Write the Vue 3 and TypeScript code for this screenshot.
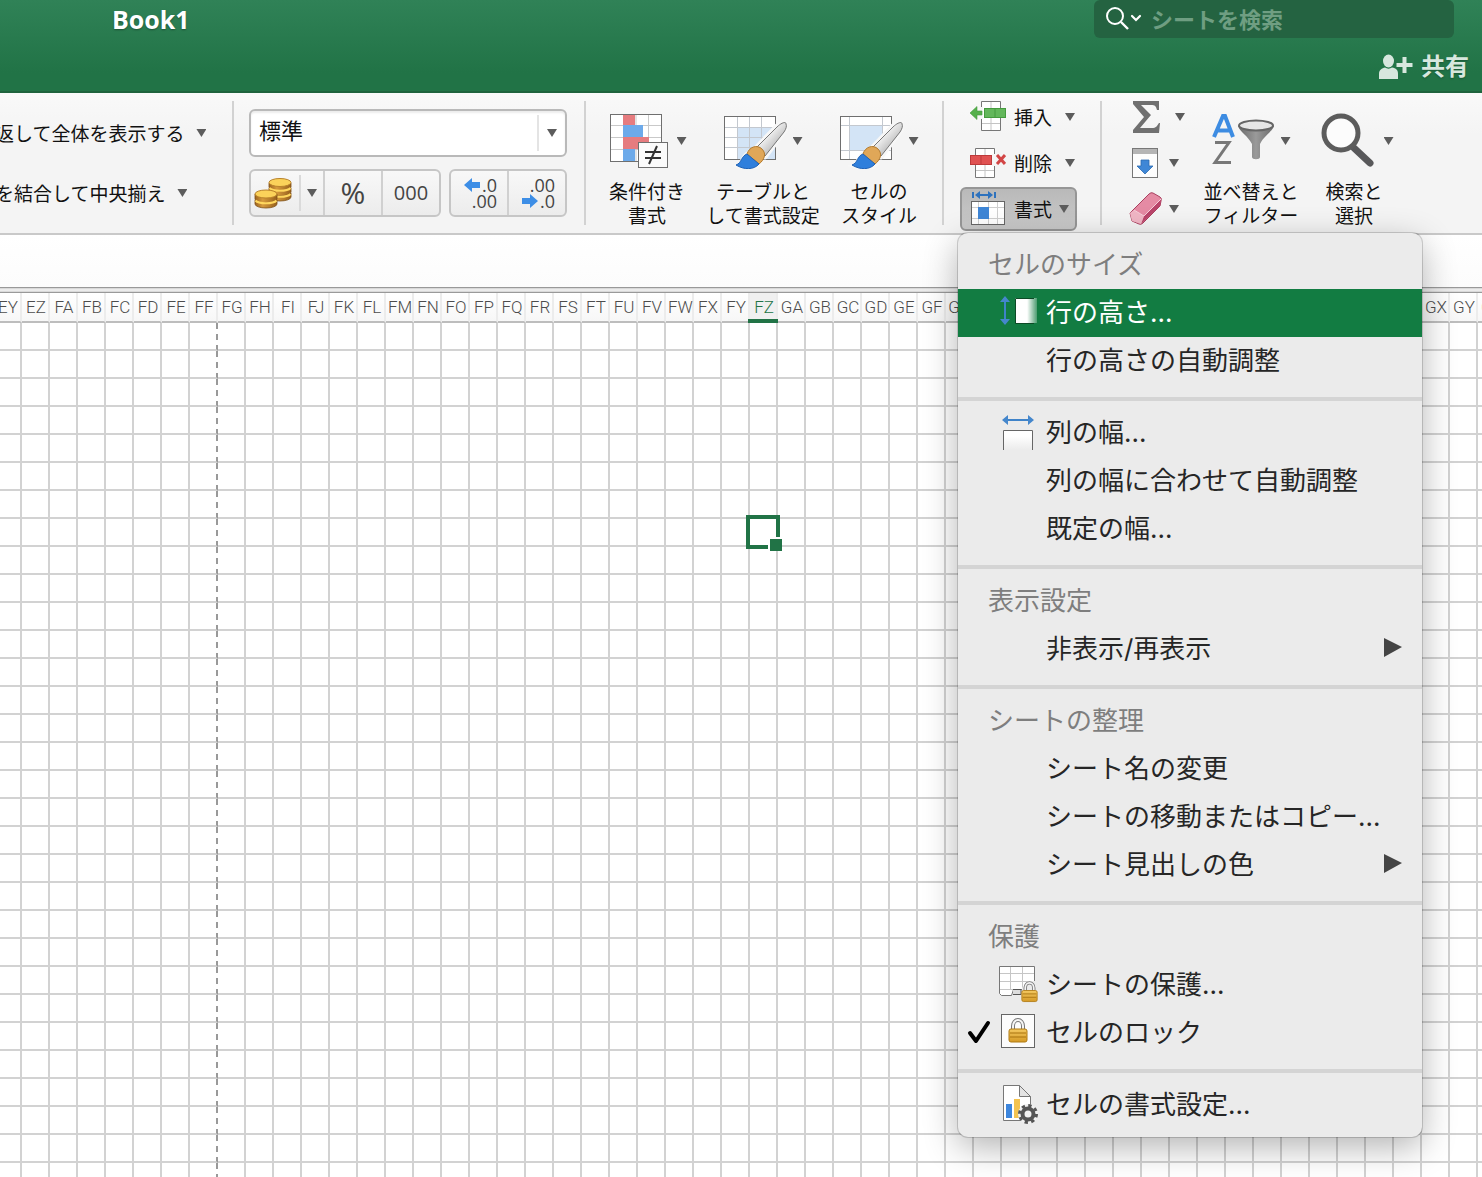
<script setup lang="ts">
import { ref } from 'vue'

interface MenuEntry {
  label: string
  icon?: string
  submenu?: boolean
  checked?: boolean
}

interface MenuSection {
  title?: string
  entries: MenuEntry[]
}

const letters = 'ABCDEFGHIJKLMNOPQRSTUVWXYZ'.split('')
const columns: string[] = [
  'EY',
  'EZ',
  ...letters.map((l) => 'F' + l),
  ...letters.map((l) => 'G' + l),
  ...letters.map((l) => 'H' + l),
]
const rowCount = 48
const activeColumn = 'FZ'
const activeRow = 8
const pageBreakColumn = 'FF'

const numberFormat = ref('標準')
const search = ref('')
const formula = ref('')
const current = ref('行の高さ...')

const sections: MenuSection[] = [
  {
    title: 'セルのサイズ',
    entries: [{ label: '行の高さ...', icon: 'row-height' }, { label: '行の高さの自動調整' }],
  },
  {
    entries: [
      { label: '列の幅...', icon: 'col-width' },
      { label: '列の幅に合わせて自動調整' },
      { label: '既定の幅...' },
    ],
  },
  { title: '表示設定', entries: [{ label: '非表示/再表示', submenu: true }] },
  {
    title: 'シートの整理',
    entries: [
      { label: 'シート名の変更' },
      { label: 'シートの移動またはコピー...' },
      { label: 'シート見出しの色', submenu: true },
    ],
  },
  {
    title: '保護',
    entries: [
      { label: 'シートの保護...', icon: 'protect' },
      { label: 'セルのロック', icon: 'lock', checked: true },
    ],
  },
  { entries: [{ label: 'セルの書式設定...', icon: 'format' }] },
]
</script>

<template>
  <div class="window">
    <svg class="defs" width="0" height="0" aria-hidden="true">
      <defs>
        <linearGradient id="handle" x1="0" y1="0" x2="1" y2="1">
          <stop offset="0.3" stop-color="#ffffff" />
          <stop offset="0.75" stop-color="#b4b4b4" />
        </linearGradient>
        <linearGradient id="gold" x1="0" y1="0" x2="0" y2="1">
          <stop offset="0" stop-color="#f3c860" />
          <stop offset="1" stop-color="#d59a26" />
        </linearGradient>
        <linearGradient id="coinside" x1="0" y1="0" x2="1" y2="0">
          <stop offset="0" stop-color="#9c6420" />
          <stop offset="0.35" stop-color="#d69a3c" />
          <stop offset="1" stop-color="#96601d" />
        </linearGradient>
        <linearGradient id="steel" x1="0" y1="0" x2="1" y2="0">
          <stop offset="0" stop-color="#6a6a6a" />
          <stop offset="0.5" stop-color="#9a9a9a" />
          <stop offset="1" stop-color="#6a6a6a" />
        </linearGradient>
        <linearGradient id="fade-right" x1="0" y1="0" x2="1" y2="0">
          <stop offset="0.55" stop-color="#ffffff" />
          <stop offset="1" stop-color="#ffffff" stop-opacity="0.25" />
        </linearGradient>
        <linearGradient id="fade-down" x1="0" y1="0" x2="0" y2="1">
          <stop offset="0.3" stop-color="#ffffff" />
          <stop offset="1" stop-color="#ebebeb" />
        </linearGradient>
        <g id="brush">
          <path d="M30 37 L53 13 C57 9 62 8 62 11 C63 13 62 16 60 19 L41 44 Z" fill="#f7f7f7" stroke="#f7f7f7" stroke-width="5" stroke-linejoin="round" />
          <path d="M13 53 C19 51 18 43 24 40 L37 51 C31 57 21 57 13 53 Z" stroke="#f7f7f7" stroke-width="4" fill="#f7f7f7" />
          <path d="M31 36 L53 14 C57 10 62 8 62 11 C63 13 62 16 60 19 L41 43 Z" fill="url(#handle)" stroke="#777" stroke-width="1" />
          <path d="M23 41 C25 34 33 31 38 36 C43 41 40 47 35 51 Z" fill="#e0a758" stroke="#b37a2c" stroke-width="1" />
          <path d="M12 52 C18 50 17 43 23 41 L35 51 C30 57 20 57 12 52 Z" fill="#2f7fdc" stroke="#1f62b5" stroke-width="1" />
        </g>
        <g id="padlock">
          <path d="M5 10 V7 a5 6 0 0 1 10 0 V10" fill="none" stroke="#777" stroke-width="4" />
          <path d="M5 11 V7 a5 6 0 0 1 10 0 V11" fill="none" stroke="#f4f4f4" stroke-width="2" />
          <rect x="1" y="10" width="18" height="13" rx="2" fill="url(#gold)" stroke="#b07a12" />
          <path d="M2 14 H18 M2 18 H18" stroke="#a8720f" stroke-width="1" />
        </g>
      </defs>
    </svg>

    <header class="titlebar">
      <div class="title-row">
        <h1>Book1</h1>
        <label class="search">
          <svg width="36" height="26" viewBox="0 0 36 26" fill="none" stroke="#fff" stroke-width="2">
            <circle cx="9" cy="10" r="8" />
            <path d="M15 16 L22 23" stroke-width="2.4" />
            <path d="M26 10 L30 14 L34 10" stroke-width="2.2" stroke-linecap="round" />
          </svg>
          <input v-model="search" type="text" placeholder="シートを検索" aria-label="シートを検索" />
        </label>
      </div>
      <div class="share-row">
        <button class="share" type="button">
          <svg width="36" height="30" viewBox="0 -4 36 30" fill="#d7e7de">
            <ellipse cx="10.500" cy="7" rx="5.500" ry="6.500" />
            <path d="M1 25 V20 C1 16 4 14 7 13.500 C9 15 12 15 14 13.500 C18 14 20 16 20 20 V25 Z" />
            <path d="M24.500 3 h4 v6 h6 v4 h-6 v6 h-4 v-6 h-6 v-4 h6 Z" />
          </svg>
          <span>共有</span>
        </button>
      </div>
    </header>

    <div class="ribbon">
      <div class="group align">
        <button class="plain" type="button"><span>折り返して全体を表示する</span><i class="caret"></i></button>
        <button class="plain" type="button"><span>セルを結合して中央揃え</span><i class="caret"></i></button>
      </div>
      <span class="sep"></span>

      <div class="group number">
        <div class="combo">
          <select v-model="numberFormat" aria-label="表示形式">
            <option>標準</option>
          </select>
          <span class="combo-arrow"><i class="caret"></i></span>
        </div>
        <div class="number-buttons">
          <div class="segmented">
            <button class="coins" type="button" aria-label="通貨表示形式">
              <svg width="38" height="32" viewBox="0 0 38 32">
                <g stroke="#7d4f16" stroke-width="0.8">
                  <path d="M14 20 v4 a11 4 0 0 0 22 0 v-4" transform="translate(1 -4)" fill="url(#coinside)" />
                  <path d="M15 12 v4 a11 4 0 0 0 22 0 v-4" transform="translate(0 -1)" fill="url(#coinside)" />
                  <path d="M15 6 v4 a11 4 0 0 0 22 0 v-4" fill="url(#coinside)" />
                </g>
                <path d="M15.500 17 a11 4 0 0 0 21 0 M15.500 11 a11 4 0 0 0 21 0" fill="none" stroke="#ffd75e" stroke-width="2" />
                <ellipse cx="26" cy="5.500" rx="11" ry="4" fill="#fbd25a" stroke="#b9822a" />
                <g stroke="#7d4f16" stroke-width="0.8">
                  <path d="M1 23 v4 a11 4 0 0 0 22 0 v-4" fill="url(#coinside)" />
                  <path d="M1 17 v5 a11 4 0 0 0 22 0 v-5" fill="url(#coinside)" />
                </g>
                <path d="M1.500 23.500 a11 4 0 0 0 21 0" fill="none" stroke="#ffd75e" stroke-width="2" />
                <ellipse cx="12" cy="17" rx="11" ry="4" fill="#fbd25a" stroke="#b9822a" />
              </svg>
            </button>
            <button class="drop" type="button" aria-label="通貨の種類"><i class="caret"></i></button>
            <button class="wide percent" type="button">%</button>
            <button class="wide thousand" type="button">000</button>
          </div>
          <div class="segmented">
            <button class="wide decimal" type="button" aria-label="小数点以下の表示桁数を増やす">
              <span>
                <svg width="16" height="14" viewBox="0 0 16 14"><path d="M0 7 L8 0 V4 H16 V10 H8 V14 Z" fill="#3d8ee6" /></svg>.0
              </span>
              <span>.00</span>
            </button>
            <button class="wide decimal" type="button" aria-label="小数点以下の表示桁数を減らす">
              <span>.00</span>
              <span>
                <svg width="16" height="14" viewBox="0 0 16 14"><path d="M16 7 L8 0 V4 H0 V10 H8 V14 Z" fill="#3d8ee6" /></svg>.0
              </span>
            </button>
          </div>
        </div>
      </div>
      <span class="sep"></span>

      <div class="group styles">
        <button class="big" type="button">
          <span class="big-icon">
            <svg width="64" height="56" viewBox="0 0 64 56">
              <rect x="2.500" y="1.500" width="51" height="47" fill="#fff" />
              <path d="M15.500 2 V48 M40.500 2 V48 M28 2 V48 M3 12.500 H53 M3 24.500 H53 M3 36.500 H53" stroke="#c9c9c9" />
              <rect x="15" y="2" width="12" height="10" fill="#e67c7f" />
              <rect x="15" y="12" width="20" height="12" fill="#6daaea" />
              <rect x="15" y="24" width="26" height="12" fill="#e67c7f" />
              <rect x="15" y="36" width="12" height="12" fill="#6daaea" />
              <rect x="2.500" y="1.500" width="51" height="47" fill="none" stroke="#6f6f6f" />
              <rect x="30.500" y="29.500" width="29" height="25" fill="#fbfbfb" stroke="#6f6f6f" />
              <path d="M37 39 H53 M37 45 H53 M49 33 L41 51" stroke="#333" stroke-width="2" />
            </svg>
            <i class="caret"></i>
          </span>
          <span>条件付き<br />書式</span>
        </button>
        <button class="big table-style" type="button">
          <span class="big-icon">
            <svg width="64" height="56" viewBox="0 0 64 56">
              <rect x="0.500" y="3.500" width="51" height="43" fill="#fff" />
              <rect x="14" y="15" width="37" height="31" fill="#d3e4f6" />
              <path d="M13.500 4 V46 M25.500 4 V46 M37.500 4 V46 M1 14.500 H51 M1 24.500 H51 M1 34.500 H51" stroke="#c3c8cf" />
              <rect x="0.500" y="3.500" width="51" height="43" fill="none" stroke="#6f6f6f" />
              <use href="#brush" />
            </svg>
            <i class="caret"></i>
          </span>
          <span>テーブルと<br />して書式設定</span>
        </button>
        <button class="big" type="button">
          <span class="big-icon">
            <svg width="64" height="56" viewBox="0 0 64 56">
              <rect x="0.500" y="3.500" width="51" height="43" fill="#fff" />
              <path d="M9.500 4 V46 M42.500 4 V46 M1 12.500 H51 M1 37.500 H51" stroke="#c3c8cf" />
              <rect x="10" y="13" width="32" height="24" fill="#d3e4f6" />
              <rect x="0.500" y="3.500" width="51" height="43" fill="none" stroke="#6f6f6f" />
              <use href="#brush" />
            </svg>
            <i class="caret"></i>
          </span>
          <span>セルの<br />スタイル</span>
        </button>
      </div>
      <span class="sep"></span>

      <div class="group cells">
        <button class="cell-btn" type="button">
          <svg width="36" height="36" viewBox="0 0 36 36">
            <path d="M11.500 2.500 H30.500 V31.500 H11.500 Z" fill="#fff" stroke="#777" />
            <path d="M21 3 V31 M12 24.500 H30" stroke="#c4c4c4" />
            <path d="M10 8 H13 V20 H10 Z" fill="#f6f6f6" />
            <rect x="14.500" y="9.500" width="21" height="9" fill="#63b75b" stroke="#459a3e" />
            <path d="M25 10 V18" stroke="#459a3e" />
            <path d="M0 14 L7 7.500 V12 H12 V16 H7 V20.500 Z" fill="#55b04c" stroke="#459a3e" stroke-width="0.6" />
          </svg>
          <span>挿入</span><i class="caret"></i>
        </button>
        <button class="cell-btn" type="button">
          <svg width="36" height="36" viewBox="0 0 36 36">
            <path d="M5.500 3.500 H24.500 V32.500 H5.500 Z" fill="#fff" stroke="#777" />
            <path d="M15 4 V32 M6 25.500 H24" stroke="#c4c4c4" />
            <path d="M22 9 H26 V21 H22 Z" fill="#f6f6f6" />
            <rect x="0.500" y="10.500" width="21" height="9" fill="#e05252" stroke="#bd3a3a" />
            <path d="M11 11 V19" stroke="#bd3a3a" />
            <path d="M27 10 L35 19 M35 10 L27 19" stroke="#d24545" stroke-width="3" />
          </svg>
          <span>削除</span><i class="caret"></i>
        </button>
        <div class="menu-anchor">
          <button class="cell-btn pressed" type="button" aria-haspopup="menu" aria-expanded="true">
            <svg width="36" height="36" viewBox="0 0 36 36">
              <path d="M3 1 V7 M25 1 V7" stroke="#2e72bd" stroke-width="2" />
              <path d="M7 4 H21" stroke="#2e72bd" stroke-width="2" />
              <path d="M5 4 L10 0 V8 Z M23 4 L18 0 V8 Z" fill="#2e72bd" />
              <rect x="1.500" y="10.500" width="33" height="23" fill="#fff" stroke="#666" />
              <path d="M8.500 11 V33 M18.500 11 V33 M27.500 11 V33 M2 16.500 H34 M2 27.500 H34" stroke="#cfcfcf" />
              <rect x="8" y="16" width="11" height="12" fill="#3f86d6" />
            </svg>
            <span>書式</span><i class="caret"></i>
          </button>

          <div class="menu" role="menu" aria-label="書式">
            <div v-for="(section, s) in sections" :key="s" class="section" role="group">
              <div v-if="section.title" class="menu-title">{{ section.title }}</div>
              <button
                v-for="entry in section.entries"
                :key="entry.label"
                class="entry"
                :class="{ current: entry.label === current }"
                type="button"
                role="menuitem"
                @mouseenter="current = entry.label"
              >
                <span class="check">
                  <svg v-if="entry.checked" width="24" height="26" viewBox="0 0 24 26" fill="none" stroke="#000" stroke-width="4" stroke-linecap="round" stroke-linejoin="round">
                    <path d="M3 13 L9 21 L21 3" />
                  </svg>
                </span>
                <svg class="entry-icon" width="40" height="40" viewBox="0 1 40 40">
                  <g v-if="entry.icon === 'row-height'">
                    <path d="M6 8 V30" stroke="#3f83c9" stroke-width="2" />
                    <path d="M6 4 L11 10 H1 Z M6 33 L11 27 H1 Z" fill="#4587cc" />
                    <rect x="16" y="6" width="22" height="25" fill="url(#fade-right)" />
                    <path d="M35 6.500 H16.500 V31.500 H35" fill="none" stroke="#0c4a26" />
                  </g>
                  <g v-else-if="entry.icon === 'col-width'">
                    <path d="M8 8 H30" stroke="#3f83c9" stroke-width="2" />
                    <path d="M3 8 L9 3 V13 Z M35 8 L29 3 V13 Z" fill="#4587cc" />
                    <rect x="4" y="18" width="30" height="20" fill="url(#fade-down)" />
                    <path d="M4.500 38 V18.500 H33.500 V38" fill="none" stroke="#666" />
                  </g>
                  <g v-else-if="entry.icon === 'protect'">
                    <path d="M0.500 2.500 H35.500 V25.500 H14.500 L12.500 31.500 H2.500 L0.500 29.500 Z" fill="#fff" stroke="#777" />
                    <path d="M11.500 3 V26 M23.500 3 V25 M1 9.500 H35 M1 17.500 H35 M1 25.500 H14" stroke="#c6c6c6" />
                    <path d="M14 25.500 H22 V30.500 H14" fill="#ddd" stroke="#555" />
                    <path d="M23 38 V24 L29 17 H36 V26 Z" fill="#ebebeb" />
                    <use href="#padlock" transform="translate(22 18) scale(0.850)" />
                  </g>
                  <g v-else-if="entry.icon === 'lock'">
                    <rect x="2.500" y="2.500" width="33" height="33" fill="#fcfcfc" stroke="#666" />
                    <use href="#padlock" transform="translate(9 7)" />
                  </g>
                  <g v-else-if="entry.icon === 'format'">
                    <path d="M4.500 1.500 H20.500 L31.500 12.500 V36.500 H4.500 Z" fill="#fff" stroke="#777" />
                    <path d="M20.500 1.500 V12.500 H31.500 Z" fill="#e4e4e4" stroke="#777" />
                    <rect x="7" y="20" width="6" height="14" fill="#3d86dd" />
                    <rect x="15" y="15" width="6" height="19" fill="#f4c34f" />
                    <circle cx="29" cy="30" r="10" fill="#f1f1f1" />
                    <circle cx="29" cy="30" r="5.500" fill="none" stroke="#555" stroke-width="4" />
                    <circle cx="29" cy="30" r="8.500" fill="none" stroke="#555" stroke-width="3" stroke-dasharray="3.338 3.338" />
                  </g>
                </svg>
                <span class="entry-label">{{ entry.label }}</span>
                <svg v-if="entry.submenu" width="18" height="22" viewBox="0 0 18 22"><path d="M0 0 L18 9 L0 19 Z" fill="#444" /></svg>
              </button>
            </div>
          </div>
        </div>
      </div>
      <span class="sep"></span>

      <div class="group edit">
        <button class="edit-btn sum" type="button" aria-label="合計">
          <svg width="34" height="36" viewBox="0 0 34 36">
            <path d="M4 2 H30 V11 H28 C27 7 26 6 22 6 H12 L22 16 L11 29 H23 C27 29 28 27 30 24 H31 L30 34 H4 V31 L15 18 L4 5 Z" fill="#707070" />
          </svg>
          <i class="caret"></i>
        </button>
        <button class="edit-btn" type="button" aria-label="フィル">
          <svg width="34" height="36" viewBox="0 0 34 36">
            <rect x="3.500" y="3.500" width="25" height="29" fill="#fdfdfd" stroke="#777" />
            <rect x="4" y="4" width="24" height="5" fill="#b5b5b5" />
            <path d="M12 15 H20 V21 H24 L16 29 L8 21 H12 Z" fill="#3f87d6" stroke="#2b69b0" stroke-width="0.800" />
          </svg>
          <i class="caret"></i>
        </button>
        <button class="edit-btn" type="button" aria-label="クリア">
          <svg width="34" height="36" viewBox="0 0 34 36">
            <path d="M1 22 L20 3 Q22 1 24 2 L31 6 Q33 7 32 10 L31 15 L14 32 Q12 34 10 33 L3 30 Z" fill="#e58ba4" stroke="#a9405f" stroke-linejoin="round" />
            <path d="M12 33 L15 25 L32 8 L31 15 Z" fill="#b9446a" />
            <path d="M1 22 L5 19 L15 25 L12 33 L3 30 Z" fill="#f0b6c5" />
            <path d="M5 19 L15 25 L32 8" fill="none" stroke="#f6cdd8" />
          </svg>
          <i class="caret"></i>
        </button>
      </div>

      <div class="group find">
        <button class="big sort" type="button">
          <span class="big-icon">
            <svg width="64" height="56" viewBox="0 0 64 56">
              <path d="M2 24 L11 3 H13 L21 24 M5 17.500 H18" fill="none" stroke="#3d8ce2" stroke-width="4" />
              <path d="M3 29.500 H17 L3 49.500 H19" fill="none" stroke="#777" stroke-width="3" />
              <path d="M26 13 C28 19 36 23 40 31 V44 C40 47 48 47 48 44 V31 C52 23 60 19 62 13 Z" fill="url(#steel)" />
              <ellipse cx="44" cy="12.500" rx="17" ry="5" fill="#e6e6e6" stroke="#666" stroke-width="2" />
            </svg>
            <i class="caret"></i>
          </span>
          <span>並べ替えと<br />フィルター</span>
        </button>
        <button class="big" type="button">
          <span class="big-icon">
            <svg width="64" height="56" viewBox="0 0 64 56">
              <path d="M39 35 L55 50" stroke="#58585a" stroke-width="7" stroke-linecap="round" />
              <circle cx="26" cy="20" r="17" fill="#fcfcfc" stroke="#5c5c5c" stroke-width="5" />
            </svg>
            <i class="caret"></i>
          </span>
          <span>検索と<br />選択</span>
        </button>
      </div>
    </div>

    <input v-model="formula" class="formula" type="text" aria-label="数式バー" />
    <div class="divider"></div>

    <main class="sheet">
      <table>
        <thead>
          <tr>
            <th v-for="c in columns" :key="c" scope="col" :class="{ active: c === activeColumn }">{{ c }}</th>
          </tr>
        </thead>
        <tbody>
          <tr v-for="r in rowCount" :key="r">
            <td v-for="c in columns" :key="c" :class="{ 'page-break': c === pageBreakColumn }">
              <div v-if="r === activeRow && c === activeColumn" class="selection"></div>
            </td>
          </tr>
        </tbody>
      </table>
    </main>
  </div>
</template>

<style>
body {
  margin: 0;
}
</style>

<style scoped>
.window {
  display: flex;
  flex-direction: column;
  height: 100vh;
  overflow: hidden;
  background: #fff;
  color: #111;
  font-family: "Noto Sans CJK JP", sans-serif;
  font-size: 19px;
  line-height: 24px;
}
.window * {
  box-sizing: border-box;
}
.defs {
  position: absolute;
}
button {
  margin: 0;
  padding: 0;
  border: 0;
  background: none;
  color: inherit;
  font: inherit;
}
svg {
  display: block;
  flex: none;
}
.caret {
  flex: none;
  width: 10px;
  height: 8px;
  background: #5c5c5c;
  clip-path: polygon(0 0, 100% 0, 50% 100%);
}

.titlebar {
  flex: none;
  border-bottom: 2px solid #1f633d;
  background: linear-gradient(#308257, #217346 80%);
}
.title-row {
  display: flex;
  justify-content: space-between;
  height: 38px;
  padding: 0 28px 0 112px;
}
h1 {
  margin: 0;
  color: #fff;
  font: bold 25px/38px "Open Sans", sans-serif;
  text-shadow: 0 1px 2px rgba(0, 0, 0, 0.35);
}
.search {
  display: flex;
  align-items: center;
  gap: 9px;
  width: 360px;
  padding-left: 12px;
  border-radius: 6px;
  background: #246341;
}
.search input {
  flex: 1;
  min-width: 0;
  height: 38px;
  padding: 0 0 2px;
  border: 0;
  outline: 0;
  background: none;
  color: #fff;
  font: bold 22px/36px "Noto Sans CJK JP", sans-serif;
}
.search input::placeholder {
  color: #6f9e82;
  opacity: 1;
}
.share-row {
  display: flex;
  justify-content: flex-end;
  height: 53px;
  padding-right: 13px;
}
.share {
  display: flex;
  align-items: center;
  gap: 7px;
  color: #d7e7de;
  font-size: 24px;
  font-weight: bold;
  text-shadow: 0 1px 2px rgba(0, 0, 0, 0.25);
}

.ribbon {
  position: relative;
  z-index: 1;
  display: flex;
  flex: none;
  align-items: center;
  height: 142px;
  border-bottom: 2px solid #c9c9c9;
  background: linear-gradient(#f9f9f9, #f4f4f4 30%);
  white-space: nowrap;
}
.sep {
  flex: none;
  width: 2px;
  height: 124px;
  background: #d2d2d2;
}
.group {
  display: flex;
  flex: none;
}
.align {
  flex-direction: column;
  align-items: flex-start;
  gap: 36px;
  width: 275px;
  margin-left: -43px;
}
.plain {
  display: flex;
  align-items: center;
  gap: 12px;
}

.number {
  flex-direction: column;
  gap: 12px;
  width: 350px;
  padding: 0 17px 0 15px;
}
.combo {
  position: relative;
  height: 48px;
}
.combo select {
  width: 100%;
  height: 48px;
  padding: 0 0 8px 8px;
  border: 2px solid #b9b9b9;
  border-radius: 6px;
  background: #fff;
  box-shadow: inset 0 2px 2px rgba(0, 0, 0, 0.08);
  color: #111;
  font: 22px/32px "Noto Sans CJK JP", sans-serif;
  appearance: none;
}
.combo-arrow {
  position: absolute;
  top: 6px;
  right: 2px;
  display: flex;
  align-items: center;
  justify-content: center;
  width: 28px;
  height: 36px;
  border-left: 2px solid #e4e4e4;
  pointer-events: none;
}
.number-buttons {
  display: flex;
  justify-content: space-between;
}
.segmented {
  display: flex;
  height: 48px;
  border: 2px solid #c6c6c6;
  border-radius: 6px;
  background: linear-gradient(#f8f8f8, #ececec);
  color: #444;
}
.segmented button {
  display: flex;
  align-items: center;
  justify-content: center;
  font-family: "Open Sans", sans-serif;
}
.segmented .coins {
  width: 48px;
  padding-right: 4px;
}
.segmented .drop {
  align-self: center;
  width: 24px;
  height: 36px;
  border-left: 2px solid #dadada;
}
.segmented .wide {
  width: 56px;
}
.segmented .wide + .wide,
.segmented .percent {
  width: 58px;
  border-left: 2px solid #d0d0d0;
}
.segmented .percent {
  font-size: 30px;
}
.segmented .thousand {
  font-size: 20px;
  font-weight: 500;
}
.segmented .decimal {
  flex-direction: column;
  align-items: flex-end;
  padding-right: 10px;
  font-size: 18px;
  font-weight: 500;
  line-height: 16px;
}
.decimal span {
  display: flex;
  align-items: center;
  gap: 2px;
}

.styles {
  gap: 18px;
  width: 356px;
  padding: 14px 0 0 21px;
}
.big {
  display: flex;
  flex-direction: column;
  align-items: center;
  gap: 10px;
  width: 80px;
}
.big.table-style {
  width: 116px;
}
.big.sort {
  width: 98px;
}
.big-icon {
  display: flex;
  align-items: center;
  gap: 5px;
}

.cells {
  flex-direction: column;
  gap: 2px;
  width: 156px;
  padding-left: 16px;
}
.cell-btn {
  display: flex;
  align-items: center;
  gap: 8px;
  width: 117px;
  height: 44px;
  padding-left: 10px;
}
.cell-btn .caret {
  margin-left: 5px;
}
.cell-btn.pressed {
  border: 2px solid #969696;
  border-radius: 6px;
  background: linear-gradient(#b9b9b9, #cacaca);
  padding-left: 8px;
}
.cell-btn.pressed .caret {
  margin-left: -1px;
}
.menu-anchor {
  position: relative;
}

.edit {
  flex-direction: column;
  gap: 2px;
  width: 100px;
  padding-left: 27px;
}
.edit-btn {
  display: flex;
  align-items: center;
  gap: 6px;
  height: 44px;
}
.edit-btn.sum {
  gap: 12px;
}
.find {
  gap: 14px;
  padding-top: 14px;
}

.menu {
  position: absolute;
  top: 46px;
  left: -2px;
  width: 464px;
  padding: 8px 0;
  border-radius: 10px;
  background: #ebebeb;
  box-shadow: 0 0 0 1px rgba(0, 0, 0, 0.16), 0 10px 34px rgba(0, 0, 0, 0.3);
  color: #262626;
  font-size: 26px;
  line-height: 48px;
}
.section + .section::before {
  display: block;
  height: 4px;
  margin: 12px 0 8px;
  background: #d4d4d4;
  content: "";
}
.menu-title {
  height: 48px;
  padding-left: 30px;
  color: #7e7e7e;
  line-height: 44px;
}
.entry {
  display: flex;
  align-items: center;
  width: 100%;
  height: 48px;
  padding-right: 20px;
  text-align: left;
}
.entry.current {
  background: #127c42;
  color: #fff;
}
.check {
  display: flex;
  flex: none;
  justify-content: center;
  width: 41px;
}
.entry-label {
  flex: 1;
  padding-left: 7px;
  font-family: Inter, "Noto Sans CJK JP", sans-serif;
}

.formula {
  flex: none;
  width: 100%;
  height: 52px;
  padding: 0 16px;
  border: 0;
  outline: 0;
  background: linear-gradient(#fff, #fcfcfc);
  font: 22px/32px "Noto Sans CJK JP", sans-serif;
}
.divider {
  flex: none;
  height: 6px;
  border-top: 1px solid #999;
  border-bottom: 1px solid #999;
  background: linear-gradient(#d0d0d0, #f4f4f4 50%, #d0d0d0);
}

.sheet {
  flex: 1;
  min-height: 0;
  overflow: hidden;
}
table {
  width: 1px;
  margin-left: -6px;
  border-spacing: 0;
  table-layout: fixed;
}
th {
  position: relative;
  width: 28px;
  height: 30px;
  padding: 0 0 0 2px;
  border-right: 2px solid #ececec;
  border-bottom: 2px solid #bdbdbd;
  background: linear-gradient(#fff, #f7f7f7);
  color: #4c4c4c;
  font: 300 17px/28px Roboto, sans-serif;
}
th.active {
  background: #f0f0f0;
  color: #217346;
}
th.active::after {
  position: absolute;
  right: -2px;
  bottom: -2px;
  left: -2px;
  height: 4px;
  background: #217346;
  content: "";
}
td {
  position: relative;
  height: 28px;
  padding: 0;
  border-right: 2px solid #d2d2d2;
  border-bottom: 2px solid #d2d2d2;
}
td.page-break {
  border-right: 2px dashed #999;
}
.selection {
  position: absolute;
  z-index: 1;
  top: -4px;
  right: -4px;
  bottom: -4px;
  left: -4px;
  border: 4px solid #217346;
}
.selection::after {
  position: absolute;
  right: -6px;
  bottom: -6px;
  width: 12px;
  height: 12px;
  border-top: 2px solid #fff;
  border-left: 2px solid #fff;
  background: #217346;
  content: "";
}
</style>
